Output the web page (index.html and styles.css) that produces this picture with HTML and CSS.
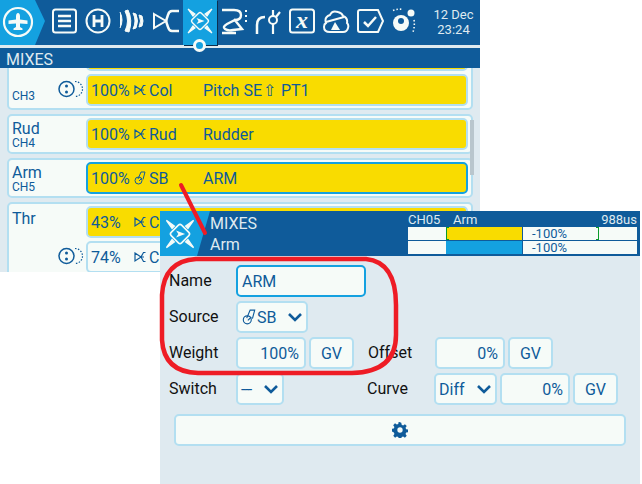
FILE: index.html
```html
<!DOCTYPE html>
<html lang="en">
<head>
  <meta charset="UTF-8">
  <title>Mixes</title>
  <link rel="stylesheet" href="styles.css">
</head>
<body>
  <div class="radio">
    <div class="topbar">
      <div class="home">
        <svg width="34" height="34" viewBox="0 0 34 34"><circle cx="17" cy="17" r="14" fill="none" stroke="#f6fbf8" stroke-width="2.200"/><path d="M17 8q2 0 2 3.500v3l7.500 1v3.500l-7.500-.5v3.500l2.500 1.500v1.500h-9v-1.500l2.500-1.500v-3.500l-7.500.5V15.500l7.500-1v-3Q15 8 17 8z" fill="#f6fbf8"/></svg>
      </div>
      <div class="tabs">
        <span class="tab"><svg width="28" height="28" viewBox="0 0 28 28"><rect x="3" y="2.500" width="23" height="23" rx="2.500" fill="none" stroke="#f6fbf8" stroke-width="2"/><path d="M8 9h13M8 14h13M8 19h13" stroke="#f6fbf8" stroke-width="2.500"/></svg></span>
        <span class="tab"><svg width="28" height="28" viewBox="0 0 28 28"><circle cx="14" cy="14" r="11.500" fill="none" stroke="#f6fbf8" stroke-width="2"/><path d="M10 8v12M18 8v12M10 14h8" stroke="#f6fbf8" stroke-width="2.800" fill="none"/></svg></span>
        <span class="tab"><svg width="28" height="28" viewBox="0 0 28 28"><path d="M2 5q4 8 0 16M7 4q5 10 0 20l4 1q4-12-1-22zM15 6q4 8 0 16l3-1q3-7 0-14zM21 8q3 6 0 12l3-1q2-5 0-10z" fill="#f6fbf8" stroke="#f6fbf8"/></svg></span>
        <span class="tab"><svg width="28" height="28" viewBox="0 0 28 28"><path d="M2 7l12 7-12 7z" fill="none" stroke="#f6fbf8" stroke-width="2"/><path d="M27 4h-7q-3 0-4 4l-2 6 2 6q1 4 4 4h7" fill="none" stroke="#f6fbf8" stroke-width="2.500"/></svg></span>
        <span class="tab tab-on">
          <svg width="30" height="30" viewBox="0 0 30 30"><use href="#mix-icon"/></svg>
          <i class="tab-dot"></i>
        </span>
        <span class="tab"><svg width="28" height="28" viewBox="0 0 28 28"><path d="M2 3h12q7 0 7 5t-6 5l-8 4q-5 3-2 5t8 1l9-1-8-10M2 26h14" fill="none" stroke="#f6fbf8" stroke-width="2.400"/><path d="M26 3v2M26 8v2M26 13v2" stroke="#f6fbf8" stroke-width="2"/></svg></span>
        <span class="tab"><svg width="28" height="28" viewBox="0 0 28 28"><path d="M3 27v-9q0-8 8-8" fill="none" stroke="#f6fbf8" stroke-width="2.500"/><circle cx="19" cy="13" r="4" fill="none" stroke="#f6fbf8" stroke-width="2"/><path d="M19 17v10M19 9V3M22 10l4-5" stroke="#f6fbf8" stroke-width="2.200"/></svg></span>
        <span class="tab"><svg width="28" height="28" viewBox="0 0 28 28"><rect x="2" y="2.500" width="24" height="23" rx="2.500" fill="none" stroke="#f6fbf8" stroke-width="2"/><text x="14" y="21" class="tab-x">x</text></svg></span>
        <span class="tab"><svg width="28" height="28" viewBox="0 0 28 28"><path d="M8 25q-6 0-6-5 0-3 2-4-2-6 4-8 2-5 8-3 4 1 5 4 5 2 4 7 2 2 1 5-1 4-5 4z" fill="none" stroke="#f6fbf8" stroke-width="2"/><path d="M4 15l18-5" stroke="#f6fbf8" stroke-width="2.200"/><path d="M13 15l5 8H9z" fill="#f6fbf8"/></svg></span>
        <span class="tab"><svg width="28" height="28" viewBox="0 0 28 28"><path d="M2 5q0-2 2-2h18l5 11-5 11H4q-2 0-2-2z" fill="none" stroke="#f6fbf8" stroke-width="2"/><path d="M8 15l4 4 8-9" fill="none" stroke="#f6fbf8" stroke-width="2.500"/></svg></span>
        <span class="tab"><svg width="28" height="28" viewBox="0 0 28 28"><circle cx="11" cy="16" r="8" fill="#f6fbf8"/><circle cx="11" cy="14" r="3" fill="#0f5b9a"/><circle cx="21" cy="6" r="3.500" fill="#f6fbf8"/><path d="M3 3.500q5-2 10-1M24 13q1 6-1 12" fill="none" stroke="#f6fbf8" stroke-width="1.600" stroke-dasharray="1.500 2"/></svg></span>
      </div>
      <div class="clock">12 Dec<br>23:24</div>
    </div>
    <div class="pagebar">MIXES</div>
    <div class="list">
      <div class="group group-cut">
        <div class="group-label"><span class="ch">CH3</span></div>
        <div class="group-lines">
          <div class="line line-on"></div>
          <div class="line line-on">
            <svg class="lock" width="26" height="18" viewBox="0 0 26 18"><use href="#multi-icon"/></svg>
            <span class="w">100%</span><span class="src"><svg width="12" height="12" viewBox="0 0 12 12"><use href="#src-icon"/></svg>Col</span><span class="nm">Pitch SE<b class="up">&#8679;</b> PT1</span>
          </div>
        </div>
      </div>
      <div class="group">
        <div class="group-label"><span class="nme">Rud</span><span class="ch">CH4</span></div>
        <div class="group-lines">
          <div class="line line-on"><span class="w">100%</span><span class="src"><svg width="12" height="12" viewBox="0 0 12 12"><use href="#src-icon"/></svg>Rud</span><span class="nm">Rudder</span></div>
        </div>
      </div>
      <div class="group">
        <div class="group-label"><span class="nme">Arm</span><span class="ch">CH5</span></div>
        <div class="group-lines">
          <div class="line line-on line-focus"><span class="w">100%</span><span class="src"><svg width="12" height="14" viewBox="0 0 12 14"><use href="#sw-icon"/></svg>SB</span><span class="nm">ARM</span></div>
        </div>
      </div>
      <div class="group">
        <div class="group-label"><span class="nme nme-solo">Thr</span></div>
        <div class="group-lines">
          <div class="line line-on"><span class="w">43%</span><span class="src"><svg width="12" height="12" viewBox="0 0 12 12"><use href="#src-icon"/></svg>C</span></div>
          <div class="line">
            <svg class="lock" width="26" height="18" viewBox="0 0 26 18"><use href="#multi-icon"/></svg>
            <span class="w">74%</span><span class="src"><svg width="12" height="12" viewBox="0 0 12 12"><use href="#src-icon"/></svg>C</span>
          </div>
        </div>
      </div>
      <i class="scroll"></i>
    </div>
  </div>

  <div class="dialog">
    <div class="dialog-head">
      <div class="dialog-icon"><svg width="34" height="34" viewBox="0 0 30 30"><use href="#mix-icon"/></svg></div>
      <div class="dialog-title">MIXES<br>Arm</div>
      <div class="monitor">
        <div class="mon-top"><span class="mon-ch">CH05</span><span class="mon-name">Arm</span><span class="mon-us">988us</span></div>
        <div class="mon-row">
          <div class="mon-half"><i class="fill-y"></i><i class="tick-l"></i></div>
          <div class="mon-half"><span>-100%</span><i class="tick-r"></i></div>
        </div>
        <div class="mon-row">
          <div class="mon-half"><i class="fill-b"></i></div>
          <div class="mon-half"><span>-100%</span></div>
        </div>
      </div>
    </div>
    <div class="form">
      <div class="frow">
        <label>Name</label>
        <div class="box box-focus box-name">ARM</div>
      </div>
      <div class="frow">
        <label>Source</label>
        <div class="box box-src"><svg width="14" height="16" viewBox="0 0 12 14"><use href="#sw-icon"/></svg>SB<svg class="chev" width="16" height="10" viewBox="0 0 16 10"><path d="M2 2l6 6 6-6" fill="none" stroke="#0f5b9a" stroke-width="2.600"/></svg></div>
      </div>
      <div class="frow">
        <label>Weight</label>
        <div class="box box-num">100%</div>
        <div class="box box-gv">GV</div>
        <label class="lab2">Offset</label>
        <div class="box box-num">0%</div>
        <div class="box box-gv">GV</div>
      </div>
      <div class="frow">
        <label>Switch</label>
        <div class="box box-sw">---<svg class="chev" width="16" height="10" viewBox="0 0 16 10"><path d="M2 2l6 6 6-6" fill="none" stroke="#0f5b9a" stroke-width="2.600"/></svg></div>
        <label class="lab2 lab2-sw">Curve</label>
        <div class="box box-diff">Diff<svg class="chev" width="16" height="10" viewBox="0 0 16 10"><path d="M2 2l6 6 6-6" fill="none" stroke="#0f5b9a" stroke-width="2.600"/></svg></div>
        <div class="box box-num">0%</div>
        <div class="box box-gv">GV</div>
      </div>
      <div class="box box-wide"><svg width="16" height="16" viewBox="0 0 24 24"><path d="M13.900 1l.6 3.200 2.200.9 2.700-1.800 2.700 2.700-1.800 2.700.9 2.200 3.200.6v3.800l-3.200.6-.9 2.200 1.800 2.700-2.700 2.700-2.700-1.800-2.200.9-.6 3.200h-3.800l-.6-3.200-2.200-.9-2.700 1.800-2.700-2.700 1.800-2.700-.9-2.200L-.5 14v-3.800l3.200-.6.900-2.200-1.800-2.700 2.700-2.700 2.700 1.800 2.200-.9.600-3.200zM12 8a4 4 0 100 8 4 4 0 000-8z" fill="#0f5b9a" fill-rule="evenodd"/></svg></div>
    </div>
  </div>

  <svg class="marks" width="642" height="484" viewBox="0 0 642 484">
    <path d="M181 185l24 48" stroke="#ee1c25" stroke-width="4" stroke-linecap="round"/>
    <path d="M196 259H366Q396 262 396 305V335Q396 372 352 373H198Q164 372 162 340V295Q164 261 196 259z" fill="none" stroke="#ee1c25" stroke-width="4.500"/>
  </svg>

  <svg class="defs" width="0" height="0">
    <symbol id="mix-icon" viewBox="0 0 30 30">
      <rect x="8.500" y="8.500" width="13" height="13" rx="2" transform="rotate(45 15 15)" fill="none" stroke="#f6fbf8" stroke-width="1.400"/>
      <path d="M11.500 12l8 3-8 3 2-3z" fill="#f6fbf8"/>
      <path d="M3 3l7 5-2 2zM27 3l-7 5 2 2zM3 27l7-5-2-2zM27 27l-7-5 2-2z" fill="#f6fbf8" stroke="#f6fbf8" stroke-width="1.200"/>
    </symbol>
    <symbol id="multi-icon" viewBox="0 0 26 18">
      <path d="M17 1.500a7.500 7.500 0 010 15" fill="none" stroke="#0f5b9a" stroke-width="1.200" stroke-dasharray="1.500 1.500"/>
      <circle cx="8.500" cy="9" r="7.500" fill="#f6fbf8" stroke="#0f5b9a" stroke-width="1.500"/>
      <circle cx="8.500" cy="6" r="1.500" fill="#0f5b9a"/><circle cx="8.500" cy="12" r="1.500" fill="#0f5b9a"/>
    </symbol>
    <symbol id="src-icon" viewBox="0 0 12 12">
      <path d="M1 2l6 4-6 4zM11.500 1.500h-2L7 6l2.500 4.500h2M7 6h3" fill="none" stroke="#0f5b9a" stroke-width="1.200"/>
    </symbol>
    <symbol id="sw-icon" viewBox="0 0 12 14">
      <circle cx="4.500" cy="9.500" r="3.500" fill="none" stroke="#0f5b9a" stroke-width="1"/>
      <path d="M4 8l3-7h4L9 8.500M5 10l3-3" fill="none" stroke="#0f5b9a" stroke-width="1"/>
    </symbol>
  </svg>
</body>
</html>
```
FILE: styles.css
```css
* {
  box-sizing: border-box;
}

body {
  margin: 0;
  background-color: #fff;
  font-family: Roboto, sans-serif;
  color: #0f5b9a;
  height: 484px;
  overflow: hidden;
  position: relative;
}

.radio {
  width: 480px;
  height: 272px;
  background-color: #dfeaf0;
  overflow: hidden;
  display: flex;
  flex-direction: column;
}

.topbar {
  height: 45px;
  background-color: #0f5b9a;
  display: flex;
  flex-shrink: 0;
}

.home {
  width: 45px;
  height: 45px;
  padding: 5px 0 0 1px;
  background-color: #14a1e0;
  clip-path: polygon(0 0, 35px 0, 45px 21px, 35px 45px, 0 45px);
  flex-shrink: 0;
}

.tabs {
  display: flex;
  padding-left: 2px;
}

.tab {
  width: 34px;
  height: 45px;
  padding-top: 7px;
  display: flex;
  justify-content: center;
  position: relative;
}

.tab-on {
  background-color: #14a1e0;
  padding-top: 6px;
  box-shadow: 1px 1px 0 #0b2f4f;
}

.tab-dot {
  position: absolute;
  left: 10px;
  top: 39px;
  width: 13px;
  height: 13px;
  border-radius: 50%;
  background-color: #14a1e0;
  border: 3px solid #f6fbf8;
}

.tab-x {
  font-family: "Liberation Serif", serif;
  font-size: 24px;
  font-weight: bold;
  font-style: italic;
  fill: #f6fbf8;
  text-anchor: middle;
}

.clock {
  width: 47px;
  margin-left: auto;
  margin-right: 3px;
  padding-top: 7px;
  font-size: 13px;
  line-height: 15px;
  text-align: center;
  color: #dfeaf0;
}

.pagebar {
  margin-top: 3px;
  height: 20px;
  flex-shrink: 0;
  background-color: #0f5b9a;
  color: #dfeaf0;
  font-size: 16px;
  line-height: 23px;
  padding-left: 6px;
}

.list {
  flex: 1;
  position: relative;
  padding: 0 7px;
  overflow: hidden;
}

.group {
  display: flex;
  margin-bottom: 4px;
  background-color: #f6fbf8;
  border: 2px solid #b3dff1;
  border-radius: 5px;
  padding: 2px 3px 2px 2px;
}

.group-cut {
  margin-top: -33px;
}

.group-label {
  width: 75px;
  padding-left: 1px;
  display: flex;
  flex-direction: column;
  flex-shrink: 0;
}

.group-cut .group-label {
  justify-content: flex-end;
  padding-bottom: 4px;
}

.nme {
  font-size: 16px;
  line-height: 14px;
  margin-top: 4px;
}

.nme-solo {
  margin-top: 6px;
}

.ch {
  font-size: 12px;
  line-height: 12px;
  margin-top: 1px;
}

.group-lines {
  flex: 1;
  display: flex;
  flex-direction: column;
  gap: 3px;
}

.line {
  height: 32px;
  flex-shrink: 0;
  border: 2px solid #b3dff1;
  border-radius: 5px;
  background-color: #f6fbf8;
  display: flex;
  align-items: center;
  padding-left: 3px;
  font-size: 16px;
  position: relative;
}

.line-on {
  background-color: #f9dc00;
}

.line-focus {
  border-color: #14a1e0;
}

.lock {
  position: absolute;
  left: -30px;
  top: 4px;
}

.w {
  width: 43px;
}

.src {
  width: 69px;
  display: flex;
  align-items: center;
  gap: 3px;
}

.up {
  font-weight: normal;
  margin: 0 1px;
}

.scroll {
  position: absolute;
  left: 470px;
  top: 52px;
  width: 4px;
  height: 55px;
  background-color: #b9c6cd;
}

.dialog {
  position: absolute;
  left: 160px;
  top: 211px;
  width: 480px;
  height: 273px;
  background-color: #dfeaf0;
}

.dialog-head {
  height: 45px;
  background-color: #0f5b9a;
  display: flex;
}

.dialog-icon {
  width: 50px;
  padding: 6px 0 0 3px;
  background-color: #14a1e0;
  clip-path: polygon(0 0, 50px 0, 37px 45px, 0 45px);
}

.dialog-title {
  font-size: 16px;
  line-height: 21px;
  padding: 2px 0 0 0;
  color: #dfeaf0;
  width: 198px;
}

.monitor {
  width: 229px;
  font-size: 13px;
  color: #dfeaf0;
  margin-top: 2px;
}

.mon-top {
  display: flex;
  height: 13px;
  line-height: 13px;
}

.mon-ch {
  width: 45px;
}

.mon-us {
  margin-left: auto;
}

.mon-row {
  height: 13px;
  margin-top: 1px;
  display: flex;
  gap: 1px;
}

.mon-half {
  width: 114px;
  background-color: #f6fbf8;
  position: relative;
  color: #0f5b9a;
  line-height: 14px;
}

.mon-half span {
  margin-left: 9px;
}

.fill-y,
.fill-b {
  position: absolute;
  right: 0;
  top: 0;
  bottom: 0;
  width: 76px;
}

.fill-y {
  background-color: #f9dc00;
}

.fill-b {
  background-color: #14a1e0;
}

.tick-l,
.tick-r {
  position: absolute;
  top: 0;
  bottom: 0;
  width: 3px;
  border: 1px solid #0b9a2b;
}

.tick-l {
  left: 38px;
  border-right: 0;
}

.tick-r {
  left: 73px;
  border-left: 0;
}

.form {
  padding: 9px 14px 0 9px;
  display: flex;
  flex-direction: column;
  gap: 4px;
  font-size: 16px;
}

.frow {
  display: flex;
  align-items: center;
  gap: 3px;
  height: 32px;
}

.frow label {
  width: 64px;
  color: #111;
  padding-bottom: 2px;
}

.frow .lab2 {
  margin-left: 11px;
}

.frow .lab2-sw {
  margin-left: 80px;
}

.box {
  height: 32px;
  border: 2px solid #b3dff1;
  border-radius: 5px;
  background-color: #f6fbf8;
  display: flex;
  align-items: center;
}

.box-focus {
  border-color: #14a1e0;
}

.box-name {
  width: 130px;
  padding-left: 4px;
}

.box-src {
  width: 72px;
  padding-left: 4px;
  gap: 1px;
}

.box-num {
  width: 70px;
  justify-content: flex-end;
  padding-right: 5px;
}

.box-gv {
  width: 45px;
  justify-content: center;
}

.box-sw {
  width: 48px;
  padding-left: 3px;
  letter-spacing: -1px;
}

.box-diff {
  width: 63px;
  padding-left: 3px;
}

.chev {
  margin-left: auto;
  margin-right: 3px;
}

.box-wide {
  width: 452px;
  margin: 5px 0 0 5px;
  justify-content: center;
}

.marks {
  position: absolute;
  left: 0;
  top: 0;
  pointer-events: none;
}

.defs {
  position: absolute;
}
```
